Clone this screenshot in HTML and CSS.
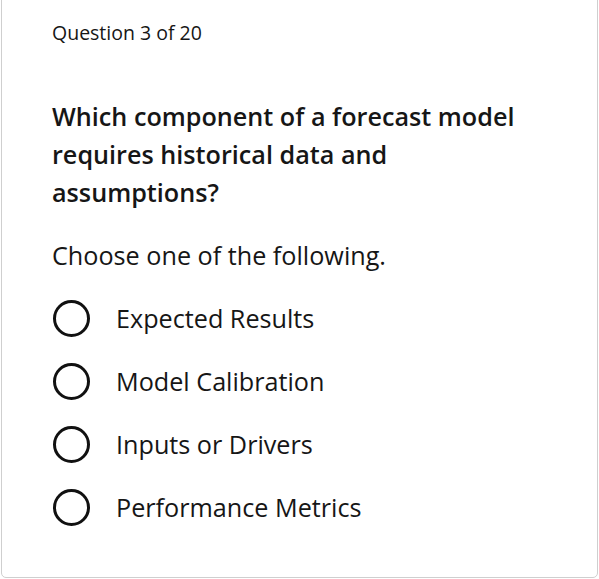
FILE: index.html
```html
<!DOCTYPE html>
<html>
<head>
<meta charset="utf-8">
<link rel="stylesheet" href="styles.css">
</head>
<body>
<div class="card">
  <div class="counter">Question 3 of 20</div>
  <h1 class="question">Which component of a forecast model requires historical data and assumptions?</h1>
  <p class="prompt">Choose one of the following.</p>
  <ul class="options">
    <li class="option"><span class="radio"></span><span class="label">Expected Results</span></li>
    <li class="option"><span class="radio"></span><span class="label">Model Calibration</span></li>
    <li class="option"><span class="radio"></span><span class="label">Inputs or Drivers</span></li>
    <li class="option"><span class="radio"></span><span class="label">Performance Metrics</span></li>
  </ul>
</div>
</body>
</html>
```
FILE: styles.css
```css
html, body {
  margin: 0;
  padding: 0;
  background: #fff;
}
body {
  font-family: "Open Sans", sans-serif;
  color: #161616;
  height: 579px;
  overflow: hidden;
}
.card {
  box-sizing: border-box;
  margin: -10px 1px 0 1px;
  height: 588px;
  border: 1px solid #cfcfcf;
  border-radius: 5px;
  padding: 29px 50px 0 50px;
}
.counter {
  font-size: 19.5px;
  line-height: 26px;
}
.question {
  font-size: 25.2px;
  font-weight: 600;
  line-height: 38px;
  margin: 51px 0 0 0;
}
.prompt {
  font-size: 25.2px;
  line-height: 34px;
  margin: 27px 0 0 0;
}
.options {
  list-style: none;
  margin: 27px 0 0 0;
  padding: 0;
  display: flex;
  flex-direction: column;
  gap: 25px;
}
.option {
  display: flex;
  align-items: center;
  height: 38px;
}
.radio {
  box-sizing: border-box;
  width: 37px;
  height: 37px;
  margin-left: 1px;
  border: 3px solid #111;
  border-radius: 50%;
  flex: none;
}
.label {
  font-size: 25.2px;
  margin-left: 26px;
}
```
